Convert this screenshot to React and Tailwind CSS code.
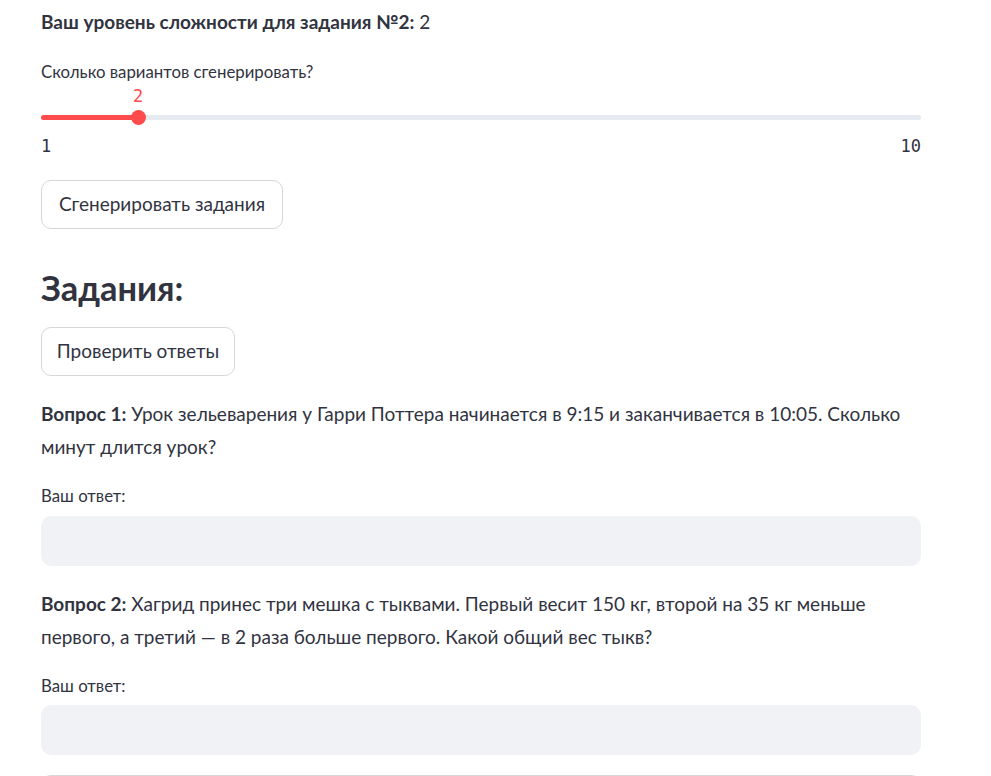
import React from "react";

function Btn({ children, w }) {
  return (
    <button
      className={`h-[49px] ${w} rounded-[10px] border border-[#d6d6d9] bg-white text-[19px] text-[#31333f] flex items-center justify-center`}
    >
      {children}
    </button>
  );
}

export default function App() {
  return (
    <div className="w-full h-[776px] overflow-hidden bg-white text-[#31333f] font-['Lato','Noto_Sans',sans-serif]">
      <div className="ml-[41px] w-[880px] flex flex-col">
        <p className="mt-[6px] h-[32px] leading-[32px] text-[19px] whitespace-nowrap">
          <span className="font-bold">Ваш уровень сложности для задания №2:</span> 2
        </p>

        <div className="mt-[23px] h-[22px] leading-[22px] text-[16.8px]">Сколько вариантов сгенерировать?</div>

        <div className="relative h-[24px]">
          <span className="absolute left-[97px] top-[2px] -translate-x-1/2 leading-[22px] text-[17px] text-[#ff4b4b] font-['DejaVu_Sans_Mono',monospace]">
            2
          </span>
        </div>
        <div className="relative h-[20px] flex items-center">
          <div className="w-full h-[5px] rounded-full bg-[#e6eaf1] flex">
            <div className="w-[97px] h-full rounded-full bg-[#ff4b4b]" />
          </div>
          <div className="absolute left-[89.5px] top-[2.5px] w-[15px] h-[15px] rounded-full bg-[#ff4b4b]" />
        </div>
        <div className="mt-[8px] h-[22px] leading-[22px] flex justify-between text-[17px] font-['DejaVu_Sans_Mono',monospace]">
          <span>1</span>
          <span>10</span>
        </div>

        <div className="mt-[23px]">
          <Btn w="w-[242px]">Сгенерировать задания</Btn>
        </div>

        <h3 className="mt-[38px] h-[42px] leading-[42px] text-[34.4px] font-bold">Задания:</h3>

        <div className="mt-[18px]">
          <Btn w="w-[194px]">Проверить ответы</Btn>
        </div>

        <p className="mt-[20.5px] leading-[33px] text-[19px] whitespace-nowrap">
          <span className="font-bold">Вопрос 1:</span> Урок зельеварения у Гарри Поттера начинается в 9:15 и заканчивается в 10:05. Сколько
          <br />
          минут длится урок?
        </p>
        <div className="mt-[22.5px] h-[22px] leading-[22px] text-[16.8px]">Ваш ответ:</div>
        <div className="mt-[9px] h-[50px] rounded-[10px] bg-[#f0f2f6]" />

        <p className="mt-[20.5px] leading-[33px] text-[19px] whitespace-nowrap">
          <span className="font-bold">Вопрос 2:</span> Хагрид принес три мешка с тыквами. Первый весит 150 кг, второй на 35 кг меньше
          <br />
          первого, а третий — в 2 раза больше первого. Какой общий вес тыкв?
        </p>
        <div className="mt-[22.5px] h-[22px] leading-[22px] text-[16.8px]">Ваш ответ:</div>
        <div className="mt-[8px] h-[50px] rounded-[10px] bg-[#f0f2f6]" />

        <div className="mt-[20px] h-[50px] rounded-[10px] border border-[#d6d6d9]" />
      </div>
    </div>
  );
}
